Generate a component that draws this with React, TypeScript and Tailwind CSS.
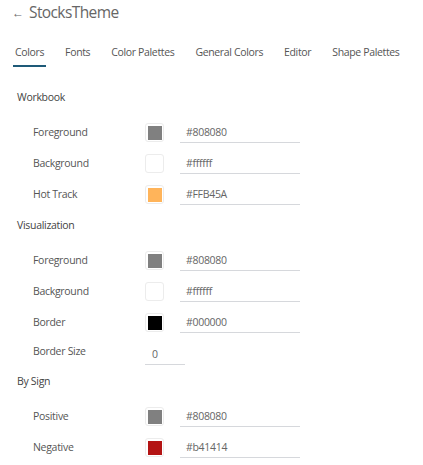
import React from "react";

interface ColorRow {
  label: string;
  color: string;
  value: string;
}

const workbook: ColorRow[] = [
  { label: "Foreground", color: "#808080", value: "#808080" },
  { label: "Background", color: "#ffffff", value: "#ffffff" },
  { label: "Hot Track", color: "#FFB45A", value: "#FFB45A" },
];

const visualization: ColorRow[] = [
  { label: "Foreground", color: "#808080", value: "#808080" },
  { label: "Background", color: "#ffffff", value: "#ffffff" },
  { label: "Border", color: "#000000", value: "#000000" },
];

const bySign: ColorRow[] = [
  { label: "Positive", color: "#808080", value: "#808080" },
  { label: "Negative", color: "#b41414", value: "#b41414" },
];

const tabs = ["Colors", "Fonts", "Color Palettes", "General Colors", "Editor", "Shape Palettes"];

function Row({ row }: { row: ColorRow }) {
  return (
    <div className="flex items-center h-[31px] pl-[33px]">
      <div className="w-[112px] text-[10.5px] tracking-[-0.3px] text-[#555]">{row.label}</div>
      <div className="w-[19px] h-[19px] border border-[#ececec] rounded-[3px] p-[1.5px] bg-white">
        <div className="w-full h-full" style={{ backgroundColor: row.color }} />
      </div>
      <div className="ml-[16px] w-[120px] h-[20px] border-b border-[#d6d8dc] pl-[6px] text-[10.5px] tracking-[-0.3px] text-[#666] leading-[18px]">
        {row.value}
      </div>
    </div>
  );
}

function Section({ title }: { title: string }) {
  return (
    <div className="pl-[17px] h-[31px] flex items-center text-[10.5px] tracking-[-0.3px] text-[#444]">{title}</div>
  );
}

export default function App() {
  return (
    <div className="w-[423px] h-[465px] bg-white overflow-hidden" style={{ fontFamily: '"Open Sans", sans-serif' }}>
      <div className="flex items-center h-[26px] pl-[12px] text-[#666]">
        <span className="text-[12px] mr-[5px]">←</span>
        <span className="text-[15.5px] tracking-[-0.6px]">StocksTheme</span>
      </div>
      <div className="flex gap-[17px] pl-[13px] mt-[13px] whitespace-nowrap">
        {tabs.map((t, i) => (
          <div
            key={t}
            className="relative shrink-0 px-[2px] h-[28px] flex items-center text-[10.5px] tracking-[-0.35px] text-[#555]"
          >
            {t}
            {i === 0 && <div className="absolute left-0 right-0 bottom-0 h-[2px] bg-[#1e5a78]" />}
          </div>
        ))}
      </div>
      <div className="mt-[15px]">
        <Section title="Workbook" />
        <div className="pt-[4px]">
          {workbook.map((r) => <Row key={r.label} row={r} />)}
        </div>
        <Section title="Visualization" />
        <div className="pt-[4px]">
          {visualization.map((r) => <Row key={r.label} row={r} />)}
          <div className="flex items-center h-[28px] pl-[33px]">
            <div className="w-[112px] text-[10.5px] tracking-[-0.3px] text-[#555]">Border Size</div>
            <div className="w-[40px] h-[20px] border-b border-[#d6d8dc] pl-[7px] text-[10.5px] text-[#666] leading-[18px] mt-[6px]">
              0
            </div>
          </div>
        </div>
        <Section title="By Sign" />
        <div className="pt-[4px]">
          {bySign.map((r) => <Row key={r.label} row={r} />)}
        </div>
      </div>
    </div>
  );
}
